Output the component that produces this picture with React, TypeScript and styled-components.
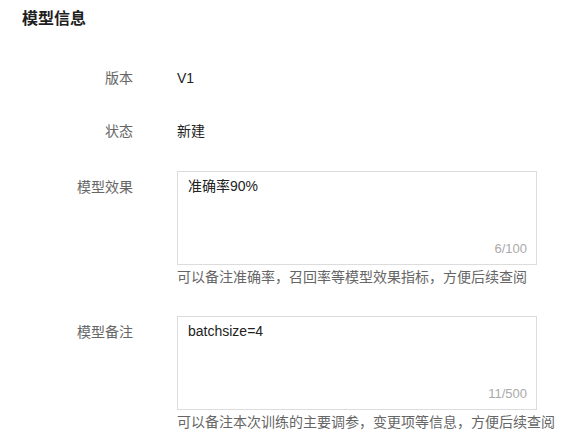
import React, { useState } from "react";
import styled, { createGlobalStyle } from "styled-components";

const GlobalStyle = createGlobalStyle`
  body {
    margin: 0;
    background: #fff;
    font-family: "Liberation Sans", "Noto Sans CJK SC", sans-serif;
    color: #222;
  }
`;

interface TextFieldProps {
  value: string;
  max: number;
  hint: string;
}

function TextField({ value, max, hint }: TextFieldProps) {
  const [text, setText] = useState(value);

  return (
    <Field>
      <Box>
        <TextArea value={text} maxLength={max} onChange={e => setText(e.target.value)} />
        <Counter>
          {text.length}/{max}
        </Counter>
      </Box>
      <Hint>{hint}</Hint>
    </Field>
  );
}

function App() {
  return (
    <Section>
      <GlobalStyle />
      <Title>模型信息</Title>
      <Form>
        <Item>
          <Label>版本</Label>
          <Value>V1</Value>
        </Item>
        <Item>
          <Label>状态</Label>
          <Value>新建</Value>
        </Item>
        <Item spaceTop={24}>
          <Label>模型效果</Label>
          <TextField value="准确率90%" max={100} hint="可以备注准确率，召回率等模型效果指标，方便后续查阅" />
        </Item>
        <Item spaceTop={28}>
          <Label>模型备注</Label>
          <TextField value="batchsize=4" max={500} hint="可以备注本次训练的主要调参，变更项等信息，方便后续查阅" />
        </Item>
      </Form>
    </Section>
  );
}

const Section = styled.section`
  padding: 7px 22px;
`;

const Title = styled.h3`
  margin: 0;
  font-size: 16px;
  line-height: 24px;
  font-weight: 700;
  color: #1f1f1f;
`;

const Form = styled.div`
  margin-top: 31px;
  display: flex;
  flex-direction: column;
`;

const Item = styled.div<{ spaceTop?: number }>`
  margin-top: ${props => props.spaceTop ?? 21}px;
  display: grid;
  grid-template-columns: 111px 360px;
  column-gap: 44px;

  &:first-child {
    margin-top: 0;
  }
`;

const Label = styled.div`
  font-size: 14px;
  line-height: 32px;
  text-align: right;
  color: #666;
`;

const Value = styled.div`
  font-size: 14px;
  line-height: 32px;
  color: #222;
`;

const Field = styled.div`
  display: flex;
  flex-direction: column;
`;

const Box = styled.div`
  position: relative;
  height: 94px;
  box-sizing: border-box;
  border: 1px solid #dcdcdc;
`;

const TextArea = styled.textarea`
  width: 100%;
  height: 100%;
  box-sizing: border-box;
  padding: 3px 10px;
  border: none;
  resize: none;
  background: transparent;
  font-family: inherit;
  font-size: 14px;
  line-height: 22px;
  color: #222;

  :focus {
    outline: none;
  }
`;

const Counter = styled.span`
  position: absolute;
  right: 9px;
  bottom: 5px;
  font-size: 13px;
  line-height: 20px;
  color: #aaa;
`;

const Hint = styled.div`
  margin-top: 1px;
  font-size: 14px;
  line-height: 22px;
  color: #666;
  white-space: nowrap;
`;

export default App;
